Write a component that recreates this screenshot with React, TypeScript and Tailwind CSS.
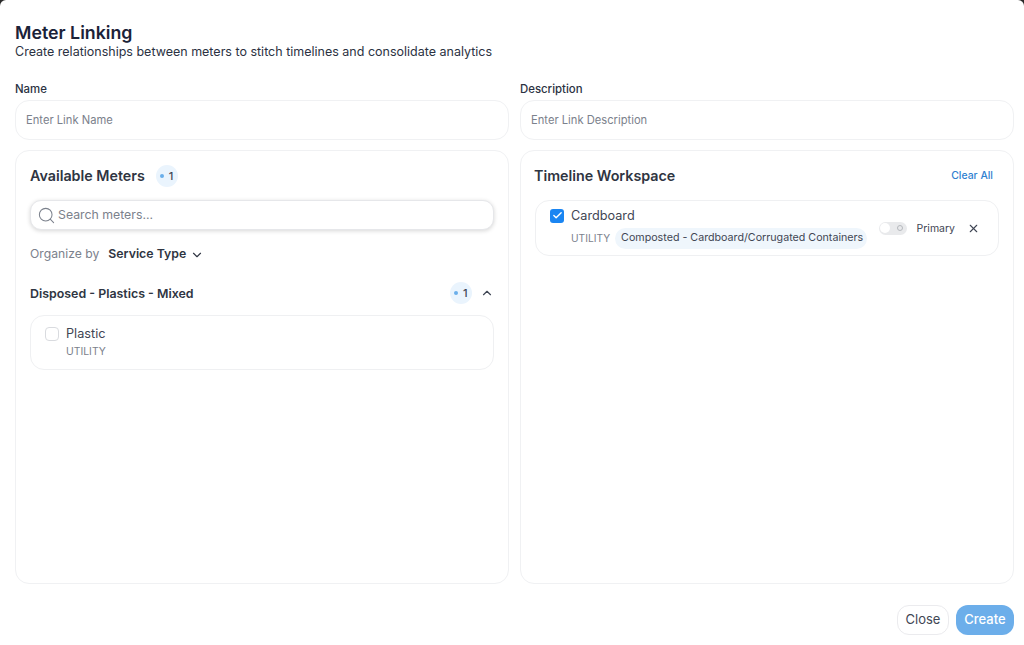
import { Check, ChevronDown, ChevronUp, Search, X } from 'lucide-react'

function CountBadge({ className = '' }: { className?: string }) {
  return (
    <span className={`flex size-[22px] items-center justify-center gap-[5px] rounded-full bg-[#eaf4fd] text-[11px] font-medium text-[#3f4654] ${className}`}>
      <span className="size-[3.5px] rounded-full bg-[#6aaeea]" />
      1
    </span>
  )
}

function Field({ label, placeholder }: { label: string; placeholder: string }) {
  return (
    <div className="flex min-w-0 flex-1 flex-col">
      <label className="mb-[2px] h-[17px] text-[11.4px] leading-[17px] font-medium text-[#2b3242]">{label}</label>
      <div className="flex h-10 items-center rounded-[14px] border border-[#f0f1f3] bg-white px-[10px] text-[11.2px] text-[#7b818c]">
        {placeholder}
      </div>
    </div>
  )
}

export default function App() {
  return (
    <div className="h-[645px] w-[1024px] overflow-hidden bg-[#2a2a2a] font-['Inter',sans-serif]">
      <div className="flex h-full flex-col rounded-t-[6px] bg-white pr-[10px] pl-[15px]">
        <header className="h-[61px] pt-[22px]">
          <h1 className="h-[22px] text-[17.8px] leading-[22px] font-semibold text-[#1b2238]">Meter Linking</h1>
          <p className="h-[16px] text-[12.5px] leading-[16px] text-[#2b3242]">Create relationships between meters to stitch timelines and consolidate analytics</p>
        </header>

        <div className="mt-[20px] flex gap-[11px]">
          <Field label="Name" placeholder="Enter Link Name" />
          <Field label="Description" placeholder="Enter Link Description" />
        </div>

        <div className="mt-[10px] flex h-[434px] gap-[11px]">
          <section className="min-w-0 flex-1 rounded-[14px] border border-[#f0f1f3] px-[14px]">
            <div className="flex h-[49px] items-center pt-[1px]">
              <h2 className="text-[14.3px] font-semibold text-[#2f3542]">Available Meters</h2>
              <CountBadge className="ml-[11px]" />
            </div>
            <div className="flex h-[30px] items-center rounded-[11px] border border-[#e6e7ea] bg-white pl-[6px] text-[12.3px] text-[#7b818c] shadow-[0_1px_4px_rgba(0,0,0,0.16)]">
              <Search size={19} strokeWidth={1.3} className="mr-[2px] text-[#7b818c]" />
              Search meters...
            </div>
            <div className="mt-[14px] flex h-[20px] items-center text-[12.2px] text-[#7b818c]">
              Organize by
              <span className="mt-[1px] ml-[9px] text-[12.3px] font-semibold text-[#2f3542]">Service Type</span>
              <ChevronDown size={14} strokeWidth={2} className="mt-[1px] ml-[4px] text-[#2f3542]" />
            </div>
            <div className="mt-[18px] flex h-[22px] items-center">
              <span className="flex-1 pt-[2px] text-[12.4px] font-semibold text-[#2f3542]">Disposed - Plastics - Mixed</span>
              <CountBadge />
              <ChevronUp size={14} strokeWidth={2} className="ml-[8px] text-[#3f4654]" />
            </div>
            <div className="mt-[11px] flex h-[55px] rounded-[14px] border border-[#eff0f2] pt-[10px] pl-[14px]">
              <span className="mt-[1px] size-[14px] rounded-[4px] border border-[#d9dbdf] bg-white" />
              <div className="mt-[1px] ml-[7px]">
                <div className="h-[14px] text-[12.7px] leading-[14px] text-[#3f4654]">Plastic</div>
                <div className="mt-[4px] text-[10.4px] leading-[14px] text-[#7b818c]">UTILITY</div>
              </div>
            </div>
          </section>

          <section className="min-w-0 flex-1 rounded-[14px] border border-[#f0f1f3] px-[14px]">
            <div className="flex h-[49px] items-center justify-between pt-[1px]">
              <h2 className="-ml-[1px] text-[14.3px] font-semibold text-[#2f3542]">Timeline Workspace</h2>
              <button className="mr-[6px] text-[10.4px] font-medium text-[#2f7fd0]">Clear All</button>
            </div>
            <div className="flex h-[56px] items-center rounded-[14px] border border-[#eff0f2] pr-[18px] pl-[14px]">
              <div className="min-w-0 flex-1">
                <div className="flex h-[17px] items-center">
                  <span className="flex size-[14px] items-center justify-center rounded-[3px] bg-[#1a85f2]">
                    <Check size={11} strokeWidth={3} className="text-white" />
                  </span>
                  <span className="ml-[7px] text-[12.7px] text-[#3f4654]">Cardboard</span>
                </div>
                <div className="mt-[4px] ml-[21px] flex h-[21px] items-center">
                  <span className="text-[10.2px] text-[#7b818c]">UTILITY</span>
                  <span className="ml-[5px] flex h-[21px] items-center rounded-full bg-[#eff6fc] pr-[4px] pl-[6px] text-[10.7px] whitespace-nowrap text-[#3f4654]">
                    Composted - Cardboard/Corrugated Containers
                  </span>
                </div>
              </div>
              <span className="relative flex h-[13px] w-[28px] items-center justify-end rounded-full bg-[#e9eaec] pr-[4px]">
                <span className="absolute top-[1.5px] left-[1.5px] size-[10px] rounded-full bg-white" />
                <span className="size-[6px] rounded-full border border-[#b5b8bd]" />
              </span>
              <span className="mt-[1px] ml-[10px] text-[10.5px] text-[#3f4654]">Primary</span>
              <X size={13} strokeWidth={2} className="ml-[12px] text-[#3f4654]" />
            </div>
          </section>
        </div>

        <footer className="mt-[21px] flex justify-end gap-[7px]">
          <button className="h-[30px] w-[52px] rounded-[12px] border border-[#ebebee] bg-white text-[13px] text-[#3f4654]">Close</button>
          <button className="h-[30px] w-[58px] rounded-[12px] bg-[#6caeea] text-[13px] font-medium text-white">Create</button>
        </footer>
      </div>
    </div>
  )
}
